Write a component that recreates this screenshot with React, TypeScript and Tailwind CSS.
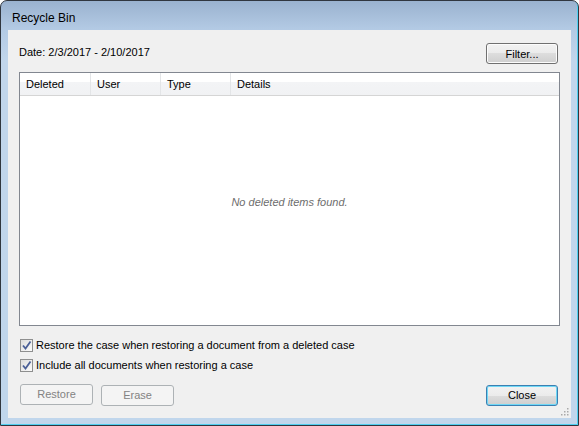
import React from 'react'

const FONT = "font-['Segoe_UI','Liberation_Sans',Arial,sans-serif]"

function Check({ label }: { label: string }) {
  return (
    <label className="flex items-center h-[14px] gap-[3px] text-[11px] text-black">
      <span className="w-[13px] h-[13px] border border-[#8e8f8f] bg-[linear-gradient(135deg,#dcdcdc,#fbfbfb)] flex items-center justify-center">
        <svg width="11" height="11" viewBox="0 0 11 11" aria-hidden="true">
          <path d="M2 5.5 L4.5 8.5 L9.5 1.5" fill="none" stroke="#4a5f97" strokeWidth="1.8" />
        </svg>
      </span>
      <span>{label}</span>
    </label>
  )
}

function Btn({
  children,
  disabled,
  focused,
}: {
  children: React.ReactNode
  disabled?: boolean
  focused?: boolean
}) {
  if (disabled) {
    return (
      <button className="w-[73px] h-[21px] rounded-[3px] border border-[#adb2b5] bg-[#f4f4f4] text-[11px] text-[#838383]">
        {children}
      </button>
    )
  }
  return (
    <button
      className={
        focused
          ? 'w-[72px] h-[21px] rounded-[3px] border border-[#3c7fb1] shadow-[inset_0_0_0_1px_#6fd8f6] bg-[linear-gradient(to_bottom,#f2f2f2_0%,#ebebeb_50%,#dddddd_50%,#cfcfcf_100%)] text-[11px] text-black'
          : 'w-[72px] h-[21px] rounded-[3px] border border-[#707070] shadow-[inset_0_0_0_1px_#fcfcfc] bg-[linear-gradient(to_bottom,#f2f2f2_0%,#ebebeb_50%,#dddddd_50%,#cfcfcf_100%)] text-[11px] text-black'
      }
    >
      {children}
    </button>
  )
}

export default function App() {
  const cols = [
    { name: 'Deleted', w: 'w-[71px]' },
    { name: 'User', w: 'w-[70px]' },
    { name: 'Type', w: 'w-[70px]' },
  ]

  return (
    <div className={`${FONT} w-[579px] h-[426px] overflow-hidden`}>
      <div className="w-full h-full flex flex-col rounded-t-[7px] border border-[#30363f] shadow-[inset_-1px_-1px_0_#4fcff0] bg-[linear-gradient(to_bottom,#9ab2cf_0px,#b3cae4_28px,#c1d6ec_60px,#c0d6ec_100%)]">
        {/* title bar */}
        <div className="h-[29px] flex items-center pl-[11px] pt-[5px] text-[12px] text-black">
          Recycle Bin
        </div>

        {/* client area */}
        <div className="mx-[7px] mb-[7px] flex-1 bg-[#f0f0f0] flex flex-col pt-[12px] px-[11px] relative">
          <div className="flex items-center justify-between h-[21px]">
            <span className="text-[11px] text-black">Date: 2/3/2017 - 2/10/2017</span>
            <div className="mr-[2px]">
              <Btn>Filter...</Btn>
            </div>
          </div>

          {/* list */}
          <div className="mt-[9px] h-[254px] border border-[#828790] bg-white flex flex-col">
            <div className="h-[23px] flex border-b border-[#d5d5d5] bg-[linear-gradient(to_bottom,#ffffff_0%,#ffffff_40%,#f3f4f6_41%,#f1f2f4_100%)] text-[11px] text-black">
              {cols.map((c) => (
                <div
                  key={c.name}
                  className={`${c.w} flex items-center pl-[6px] border-r border-[#e3e5e7]`}
                >
                  {c.name}
                </div>
              ))}
              <div className="flex-1 flex items-center pl-[6px]">Details</div>
            </div>
            <div className="flex-1 flex items-center justify-center pb-[17px]">
              <span className="italic text-[11px] text-[#6d6d6d]">No deleted items found.</span>
            </div>
          </div>

          <div className="mt-[12px] flex flex-col gap-[6px] pl-[1px]">
            <Check label="Restore the case when restoring a document from a deleted case" />
            <Check label="Include all documents when restoring a case" />
          </div>

          <div className="mt-[10px] flex items-center pl-[1px]">
            <Btn disabled>Restore</Btn>
            <div className="ml-[8px]">
              <Btn disabled>Erase</Btn>
            </div>
            <div className="ml-auto mr-[2px]">
              <Btn focused>Close</Btn>
            </div>
          </div>

          {/* size grip */}
          <svg className="absolute right-[1px] bottom-[1px]" width="10" height="10" viewBox="0 0 10 10" aria-hidden="true">
            {[
              [7, 1],
              [4, 4],
              [7, 4],
              [1, 7],
              [4, 7],
              [7, 7],
            ].map(([x, y]) => (
              <rect key={`${x}-${y}`} x={x} y={y} width="1.5" height="1.5" fill="#a9a9a9" />
            ))}
          </svg>
        </div>
      </div>
    </div>
  )
}
